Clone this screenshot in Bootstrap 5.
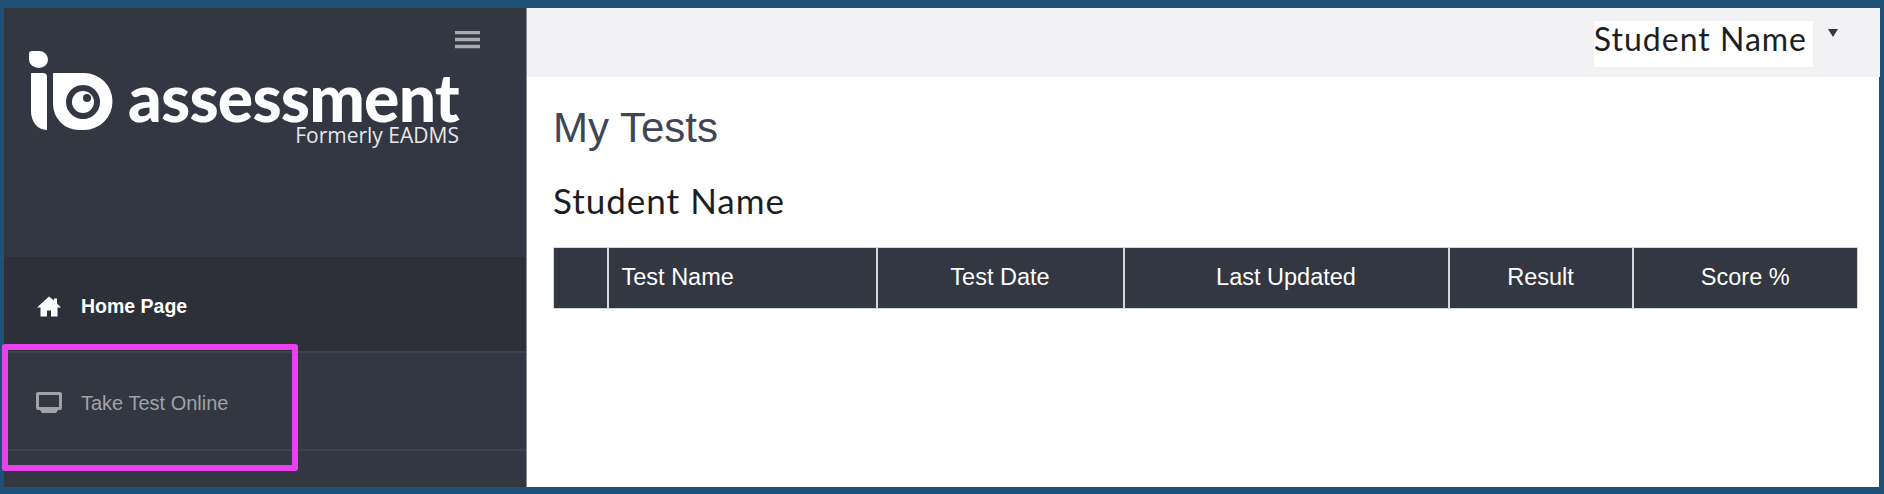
<!DOCTYPE html>
<html lang="en">
<head>
  <meta charset="UTF-8" />
  <title>My Tests</title>
  <meta name="viewport" content="width=device-width, initial-scale=1" />
  <link href="https://cdn.jsdelivr.net/npm/bootstrap@5.3.0/dist/css/bootstrap.min.css" rel="stylesheet" />
  <style>
    html, body { height: 100%; }
    body {
      background: #1f5178;
      font-family: "Liberation Sans", Arial, sans-serif;
      overflow: hidden;
    }
    .frame {
      position: relative;
      height: 494px;
      padding: 8px 5px 7px 4px;
    }
    .shell { height: 100%; background: #fff; }
    .side {
      width: 523px;
      flex: none;
      background: #333742;
      border-right: 1px solid #8a8d94;
    }
    .brand { height: 249px; padding: 23px 46px 0 25px; }
    .burger { width: 25px; height: 18px; display: block; margin-left: auto; }
    .logo-row { margin-top: 2px; }
    .logo-mark { width: 84px; height: 80px; flex: none; }
    .logo-text { margin-left: 15px; margin-top: 20px; text-align: right; color: #fff; }
    .logo-name {
      font-family: Lato, sans-serif;
      font-weight: 900;
      font-size: 66px;
      line-height: 52px;
      letter-spacing: -.8px;
    }
    .logo-sub { font-family: "Open Sans", sans-serif; font-size: 21px; line-height: 24px; color: #e6e7e9; }
    .side-link {
      padding: 5px 0 0 32px;
      font-size: 20px;
      border-bottom: 2px solid #3e424e;
      color: #a0a2a7;
      text-decoration: none;
    }
    .side-link.on { height: 96px; background: #2d3039; color: #fff; font-weight: 700; font-size: 19.5px; }
    .side-link.off { height: 98px; padding-top: 3px; }
    .side-link svg { width: 26px; height: 21px; margin-right: 19px; flex: none; }
    .topbar { height: 69px; background: #f2f2f4; padding: 13px 42px 0 0; }
    .user-name {
      background: #fff;
      font-family: Lato, sans-serif;
      font-size: 32px;
      line-height: 36px;
      height: 46px;
      padding-right: 6px;
      color: #1c1e22;
      letter-spacing: 1px;
    }
    .caret-mark {
      width: 0; height: 0;
      margin: 8px 0 0 15px;
      border-left: 5.5px solid transparent;
      border-right: 5.5px solid transparent;
      border-top: 8px solid #343844;
    }
    .main-body { padding: 28px 22px 0 26px; }
    .page-title { font-size: 42px; line-height: 46px; color: #3f4655; margin: 0; font-weight: 400; }
    .student-title {
      font-family: Lato, sans-serif;
      font-size: 35px;
      line-height: 40px;
      font-weight: 400;
      color: #1c1e22;
      letter-spacing: 1px;
      margin: 29px 0 27px;
    }
    .tests-table { table-layout: fixed; width: 1304px; margin: 0; border-collapse: collapse; }
    .tests-table th {
      background: #333742;
      color: #fff;
      height: 61px;
      padding: 0 13px;
      font-size: 23.5px;
      font-weight: 400;
      text-align: center;
      vertical-align: middle;
      border: 2px solid #d5d6da;
      border-top-width: 1px;
      border-bottom-width: 1px;
    }
    .tests-table th:first-child { border-left-width: 1px; }
    .tests-table th:last-child { border-right-width: 1px; }
    .tests-table th.text-start { text-align: left; }
    .note-box {
      position: absolute;
      left: 2px; top: 344px;
      width: 296px; height: 127px;
      border: 6px solid #ea41ee;
      border-radius: 3px;
      pointer-events: none;
    }
  </style>
</head>
<body>
  <div class="frame">
    <div class="shell d-flex">
      <aside class="side d-flex flex-column">
        <div class="brand">
          <svg class="burger" viewBox="0 0 25 18"><path d="M0 1.500h25M0 8.500h25M0 15.500h25" stroke="#a9abb0" stroke-width="3.400" /></svg>
          <div class="logo-row d-flex">
            <svg class="logo-mark" viewBox="0 0 84 80">
              <path d="M0 3a3 3 0 0 1 3-3h7a9 8.500 0 0 1 9 8.500a9 8.500 0 0 1-9 8.500a10 8.500 0 0 1-10-8.500z" fill="#fff" />
              <path d="M2 22h12a4 4 0 0 1 4 4v53C8 79 2 70 2 60z" fill="#fff" />
              <path fill-rule="evenodd" fill="#fff" d="M24 22h31a28.500 28.500 0 0 1 0 57h-5a26 26 0 0 1-26-26zM54 34a17 17 0 1 0 .01 0z" />
              <circle cx="54" cy="51" r="11" fill="#fff" />
              <circle cx="58" cy="47" r="4" fill="#333742" />
            </svg>
            <div class="logo-text">
              <div class="logo-name">assessment</div>
              <div class="logo-sub">Formerly EADMS</div>
            </div>
          </div>
        </div>
        <a href="#" class="side-link on d-flex align-items-center">
          <svg viewBox="0 0 26 21"><path d="M13 0.500L1 11.500h3.500v9H11v-6h4v6h6.500v-9H25l-4-4V2.500h-3v2z" fill="#fff" /></svg>
          Home Page
        </a>
        <a href="#" class="side-link off d-flex align-items-center">
          <svg viewBox="0 0 26 21"><path fill-rule="evenodd" fill="#a0a2a7" d="M2 0h22a2 2 0 0 1 2 2v14a2 2 0 0 1-2 2h-2l-2 3H6l-2-3H2a2 2 0 0 1-2-2V2a2 2 0 0 1 2-2zM3 3v12h20V3z" /></svg>
          Take Test Online
        </a>
      </aside>
      <main class="flex-grow-1 d-flex flex-column">
        <div class="topbar d-flex justify-content-end align-items-start">
          <span class="user-name">Student Name</span>
          <span class="caret-mark"></span>
        </div>
        <div class="main-body">
          <h1 class="page-title">My Tests</h1>
          <h2 class="student-title">Student Name</h2>
          <table class="table tests-table">
            <colgroup>
              <col style="width:54px" /><col style="width:269px" /><col style="width:247px" />
              <col style="width:325px" /><col style="width:184px" /><col style="width:225px" />
            </colgroup>
            <thead>
              <tr>
                <th></th>
                <th class="text-start">Test Name</th>
                <th>Test Date</th>
                <th>Last Updated</th>
                <th>Result</th>
                <th>Score %</th>
              </tr>
            </thead>
          </table>
        </div>
      </main>
    </div>
    <div class="note-box"></div>
  </div>
  <script src="https://cdn.jsdelivr.net/npm/bootstrap@5.3.0/dist/js/bootstrap.bundle.min.js"></script>
</body>
</html>
